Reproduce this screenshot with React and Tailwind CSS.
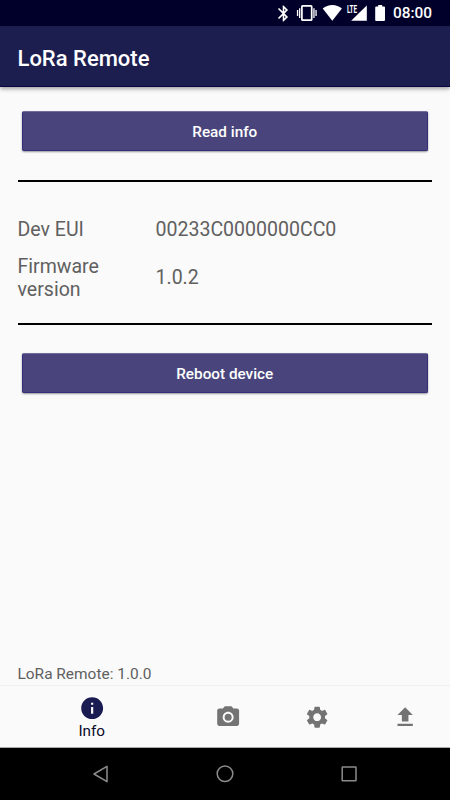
import React, { useState } from "react";
import {
  MdBluetooth,
  MdFileUpload,
  MdInfo,
  MdPhotoCamera,
  MdSettings,
} from "react-icons/md";

const tabs = [
  { name: "Info", icon: MdInfo },
  { name: "Camera", icon: MdPhotoCamera },
  { name: "Settings", icon: MdSettings },
  { name: "Upload", icon: MdFileUpload },
];

const StatusBar = () => {
  return (
    <div className="flex h-[26px] shrink-0 items-center bg-[#00002a] pl-[274px] text-white">
      <MdBluetooth className="h-[19px] w-[19px] shrink-0" />

      {/* ===== VIBRATE / WIFI / SIGNAL / BATTERY ===== */}
      <svg className="h-[26px] w-[96px] shrink-0" viewBox="293 0 96 26" fill="currentColor">
        <rect x="301.9" y="5.9" width="9.8" height="14.2" rx="0.7" fill="none" stroke="currentColor" strokeWidth="1.7" />
        <path d="M299 8.2h1.3v9.8H299zM313.3 8.2h1.3v9.8h-1.3z" />
        <path d="M296.9 10h1.3v6h-1.3zM315.4 10h1.3v6h-1.3z" />
        <path d="M332.3 20.8L322.7 8.5c2.8-2.2 6-3.4 9.6-3.4s6.8 1.2 9.6 3.4z" />
        <text
          x="346.9"
          y="13"
          textLength="10.2"
          lengthAdjust="spacingAndGlyphs"
          className="font-[Roboto,sans-serif] text-[10px] font-bold"
        >
          LTE
        </text>
        <path d="M366.8 5.5v15.300h-15.600l7.300-7.200z" />
        <path d="M378.2 5h4v1.600h1.800q1 0 1 1v12.400q0 1-1 1h-7.800q-1 0-1-1V7.600q0-1 1-1h2z" />
      </svg>

      <span className="ml-[4px] pt-[2px] text-[15.4px] font-medium leading-none">08:00</span>
    </div>
  );
};

const Field = ({ label, value }) => {
  return (
    <div className="flex items-center">
      <span className="w-[138px] shrink-0 pr-8">{label}</span>
      <span>{value}</span>
    </div>
  );
};

const ActionButton = ({ children }) => {
  return (
    <button
      type="button"
      className="mx-[4px] flex h-[40px] items-center justify-center rounded-[2px] border border-[#352f7b] border-t-[#716e99] bg-[#49457c] pt-[2px] text-[15.3px] font-medium text-white shadow-[0px_1px_2px_rgba(0,0,0,0.4)]"
    >
      {children}
    </button>
  );
};

const App = () => {
  const [active, setActive] = useState("Info");

  return (
    <div className="flex h-[800px] w-[450px] flex-col overflow-hidden bg-[#fafafa] font-[Roboto,sans-serif] text-[#606060]">
      <StatusBar />

      {/* ===== APP BAR ===== */}
      <header className="flex h-[61px] shrink-0 items-center border-b border-[#08053f] bg-[#1c1e50] px-[17.5px] pt-[4px] shadow-[0px_2px_4px_rgba(0,0,0,0.35)]">
        <h1 className="text-[22px] font-medium text-white">LoRa Remote</h1>
      </header>

      {/* ===== CONTENT ===== */}
      <main className="flex flex-1 flex-col pt-6 pr-[18px] pl-[17.5px]">
        <ActionButton>Read info</ActionButton>

        <div className="mt-[29px] h-[2px] bg-black" />
        <div className="flex h-[141px] flex-col gap-[14px] pt-[35.5px] text-[19.55px] leading-[23px]">
          <Field label="Dev EUI" value="00233C0000000CC0" />
          <Field label="Firmware version" value="1.0.2" />
        </div>
        <div className="mb-[28px] h-[2px] bg-black" />

        <ActionButton>Reboot device</ActionButton>

        <p className="mt-auto pb-[2px] text-[15.45px] leading-[18px]">LoRa Remote: 1.0.0</p>
      </main>

      {/* ===== TABS ===== */}
      <nav className="flex h-[63px] shrink-0 border-t border-b border-t-[#efefef] border-b-[#a9a9a9]">
        {tabs.map(({ name, icon: Icon }) => (
          <button
            key={name}
            type="button"
            aria-label={name}
            onClick={() => setActive(name)}
            className={
              active === name
                ? "flex w-[183.5px] shrink-0 flex-col items-center pt-[9px] text-[#1a1c51]"
                : "flex flex-1 flex-col items-center pt-[18px] text-[#737373]"
            }
          >
            <Icon className="h-[26.3px] w-[26.3px] shrink-0" />
            {active === name && (
              <span className="text-[15.3px] leading-[20px] text-[#0b0b2b]">{name}</span>
            )}
          </button>
        ))}
      </nav>

      {/* ===== SYSTEM NAVIGATION ===== */}
      <div className="flex h-[52px] shrink-0 items-center bg-black">
        <svg className="h-[52px] w-[450px]" viewBox="0 0 450 52" fill="none" stroke="#8c8c8c" strokeWidth="1.5">
          <path d="M107 18.3v15.4L94 26z" strokeLinejoin="round" />
          <circle cx="225" cy="25.7" r="7.8" />
          <rect x="342.2" y="19" width="13.8" height="13.8" rx="0.5" />
        </svg>
      </div>
    </div>
  );
};

export default App;
